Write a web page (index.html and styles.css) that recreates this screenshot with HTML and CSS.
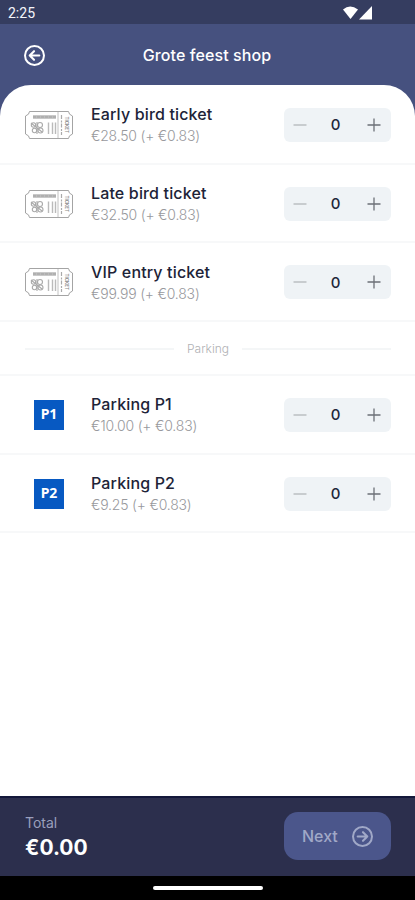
FILE: index.html
```html
<!DOCTYPE html>
<html lang="nl">
<head>
  <meta charset="UTF-8" />
  <meta name="viewport" content="width=device-width, initial-scale=1" />
  <title>Grote feest shop</title>
  <link rel="stylesheet" href="styles.css">
</head>
<body>

  <!-- Shared icons -->
  <svg class="sprite" aria-hidden="true">
    <symbol id="ticket" viewBox="0 0 48 28">
      <path d="M4.500 .5h39q0 3 4 4.500v18q-4 1.500-4 4.500h-39q0-3-4-4.500v-18q4-1.500 4-4.500z" fill="none" stroke="#9a9a9a" stroke-width=".9"/>
      <path d="M33 1v26" stroke="#b3b3b3" stroke-width=".8"/>
      <path d="M36.500 4v20" stroke="#aaa" stroke-width="1.200" stroke-dasharray="4 1.500 2 1"/>
      <path d="M8 6h23" stroke="#bcbcbc" stroke-width="3.600"/>
      <path d="M8 6h23" stroke="#a3a3a3" stroke-width="1" stroke-dasharray="3 1"/>
      <g fill="none" stroke="#aaa" stroke-width="1.100">
        <circle cx="8.500" cy="14" r="2.200"/>
        <circle cx="15" cy="14" r="2.500"/>
        <circle cx="9.500" cy="19.500" r="2.200"/>
        <circle cx="15.500" cy="19.500" r="2.500"/>
        <path d="M6 12l11 9M12 11v12"/>
      </g>
      <path d="M23.500 11.500v11.500M27.500 11.500v11.500M30.500 11.500v11.500" stroke="#bababa" stroke-width="1.400"/>
      <text class="ticket-text" transform="translate(39.500 5.500) rotate(90)">TICKET</text>
    </symbol>
    <symbol id="arrow-circle" viewBox="0 0 24 24">
      <circle cx="12" cy="12" r="9.900" fill="none" stroke="currentColor" stroke-width="2.100"/>
      <path d="M7 12h10M12.500 7.500L17 12l-4.500 4.500" fill="none" stroke="currentColor" stroke-width="2.200" stroke-linecap="round" stroke-linejoin="round"/>
    </symbol>
    <symbol id="minus" viewBox="0 0 14 14">
      <path d="M.5 7h13" stroke="currentColor" stroke-width="1.300"/>
    </symbol>
    <symbol id="plus" viewBox="0 0 14 14">
      <path d="M.5 7h13M7 .5v13" stroke="currentColor" stroke-width="1.300"/>
    </symbol>
  </svg>

  <div class="status-bar">
    <span>2:25</span>
    <svg width="32" height="16" viewBox="0 0 32 16">
      <path d="M1 4.500Q8 -1.500 16 4.500L8.500 14z" fill="#fff"/>
      <path d="M17 14.500L30 1v13.500z" fill="#fff"/>
    </svg>
  </div>

  <header class="header">
    <button class="back" aria-label="Back"><svg><use href="#arrow-circle"/></svg></button>
    <h1>Grote feest shop</h1>
  </header>

  <main class="content">
    <div class="sheet">
      <div class="item">
        <svg class="ticket"><use href="#ticket"/></svg>
        <div class="info"><h2>Early bird ticket</h2><p>€28.50 (+ €0.83)</p></div>
        <div class="stepper">
          <button class="minus" aria-label="Less"><svg><use href="#minus"/></svg></button>
          <span>0</span>
          <button aria-label="More"><svg><use href="#plus"/></svg></button>
        </div>
      </div>
      <div class="item">
        <svg class="ticket"><use href="#ticket"/></svg>
        <div class="info"><h2>Late bird ticket</h2><p>€32.50 (+ €0.83)</p></div>
        <div class="stepper">
          <button class="minus" aria-label="Less"><svg><use href="#minus"/></svg></button>
          <span>0</span>
          <button aria-label="More"><svg><use href="#plus"/></svg></button>
        </div>
      </div>
      <div class="item">
        <svg class="ticket"><use href="#ticket"/></svg>
        <div class="info"><h2>VIP entry ticket</h2><p>€99.99 (+ €0.83)</p></div>
        <div class="stepper">
          <button class="minus" aria-label="Less"><svg><use href="#minus"/></svg></button>
          <span>0</span>
          <button aria-label="More"><svg><use href="#plus"/></svg></button>
        </div>
      </div>

      <div class="divider"><span>Parking</span></div>

      <div class="item">
        <div class="parking">P1</div>
        <div class="info"><h2>Parking P1</h2><p>€10.00 (+ €0.83)</p></div>
        <div class="stepper">
          <button class="minus" aria-label="Less"><svg><use href="#minus"/></svg></button>
          <span>0</span>
          <button aria-label="More"><svg><use href="#plus"/></svg></button>
        </div>
      </div>
      <div class="item">
        <div class="parking">P2</div>
        <div class="info"><h2>Parking P2</h2><p>€9.25 (+ €0.83)</p></div>
        <div class="stepper">
          <button class="minus" aria-label="Less"><svg><use href="#minus"/></svg></button>
          <span>0</span>
          <button aria-label="More"><svg><use href="#plus"/></svg></button>
        </div>
      </div>
    </div>
  </main>

  <footer class="footer">
    <div class="total">
      <span>Total</span>
      <strong>€0.00</strong>
    </div>
    <button class="next">Next <svg><use href="#arrow-circle"/></svg></button>
  </footer>

  <div class="nav-bar"><div class="handle"></div></div>

</body>
</html>
```
FILE: styles.css
```css
/* Reset & basics */
* {
  box-sizing: border-box;
  margin: 0;
  padding: 0;
}
body {
  height: 100vh;
  display: flex;
  flex-direction: column;
  overflow: hidden;
  background: #fff;
  font-family: Inter, Roboto, sans-serif;
}
button {
  border: none;
  background: none;
  font: inherit;
  color: inherit;
  cursor: pointer;
}
svg {
  display: block;
}
.sprite {
  position: absolute;
  width: 0;
  height: 0;
}

/* Status bar */
.status-bar {
  height: 24px;
  flex: none;
  display: flex;
  justify-content: space-between;
  align-items: center;
  padding: 2px 41px 0 8px;
  background: #353d60;
  color: #f4f5fa;
  font: 14px Roboto, sans-serif;
}

/* Header */
.header {
  height: 61px;
  flex: none;
  display: grid;
  grid-template-columns: 22px 1fr 22px;
  align-items: center;
  padding: 1px 24px 0 23px;
  background: #46517f;
  color: #fff;
}
.header h1 {
  font-size: 16px;
  font-weight: 500;
  letter-spacing: .1px;
  text-align: center;
}
.back svg {
  width: 23px;
  height: 23px;
  transform: scaleX(-1);
}

/* Sheet */
.content {
  flex: 1;
  background: #46517f;
}
.sheet {
  height: 100%;
  padding-top: 1px;
  background: #fff;
  border-radius: 31px 31px 0 0;
}
.item {
  height: 78.700px;
  display: flex;
  align-items: center;
  padding: 1px 24px 0 25px;
  border-bottom: 2px solid #f7f8f9;
}
.ticket {
  width: 48px;
  height: 28px;
}
.ticket-text {
  font: bold 4.500px Inter, sans-serif;
  fill: #888;
}
.parking {
  width: 30px;
  height: 30px;
  margin: 0 9px;
  background: #0759c2;
  color: #fff;
  font: bold 14px/28px "Noto Sans", sans-serif;
  text-align: center;
}
.info {
  flex: 1;
  margin-left: 18px;
}
.info h2 {
  color: #202337;
  font-size: 16px;
  font-weight: 500;
  letter-spacing: .15px;
  line-height: 22px;
}
.info p {
  color: #98999d;
  font-size: 14px;
  font-weight: 300;
  letter-spacing: -.2px;
  line-height: 21px;
}

/* Quantity stepper */
.stepper {
  width: 107px;
  height: 34px;
  display: grid;
  grid-template-columns: 14px 1fr 14px;
  align-items: center;
  padding: 0 10px 0 9px;
  border-radius: 6px;
  background: #eff3f6;
  color: #22263a;
  font-size: 15px;
  font-weight: 500;
}
.stepper span {
  padding-right: 3px;
  text-align: center;
}
.stepper svg {
  width: 14px;
  height: 14px;
  color: #6c7077;
}
.stepper .minus svg {
  color: #b3b6ba;
}

/* Section divider */
.divider {
  height: 54px;
  display: flex;
  align-items: center;
  gap: 13px;
  padding: 1px 24px 0 25px;
  border-bottom: 2px solid #f7f8f9;
  color: #b0b1b4;
  font-size: 12px;
  font-weight: 300;
}
.divider::before,
.divider::after {
  content: "";
  flex: 1;
  height: 2px;
  background: #f4f6f7;
}

/* Footer */
.footer {
  height: 80px;
  flex: none;
  display: flex;
  justify-content: space-between;
  align-items: center;
  padding: 0 24px 2px 25px;
  background: #2c2f4d;
  border-top: 2px solid #14183a;
}
.total span {
  display: block;
  color: #9a9fbd;
  font-size: 14px;
  line-height: 23px;
}
.total strong {
  display: block;
  color: #fff;
  font-size: 21px;
  font-weight: 700;
  line-height: 27px;
}
.next {
  width: 107px;
  height: 48px;
  display: flex;
  justify-content: space-between;
  align-items: center;
  padding: 0 17px 0 18px;
  border-radius: 14px;
  background: #4b568b;
  color: #a0a8c7;
  font-size: 16px;
  font-weight: 500;
}
.next svg {
  width: 23px;
  height: 23px;
}

/* Android navigation bar */
.nav-bar {
  height: 24px;
  flex: none;
  display: flex;
  justify-content: center;
  align-items: center;
  background: #000;
}
.handle {
  width: 110px;
  height: 4px;
  border-radius: 2px;
  background: #fff;
}
```
